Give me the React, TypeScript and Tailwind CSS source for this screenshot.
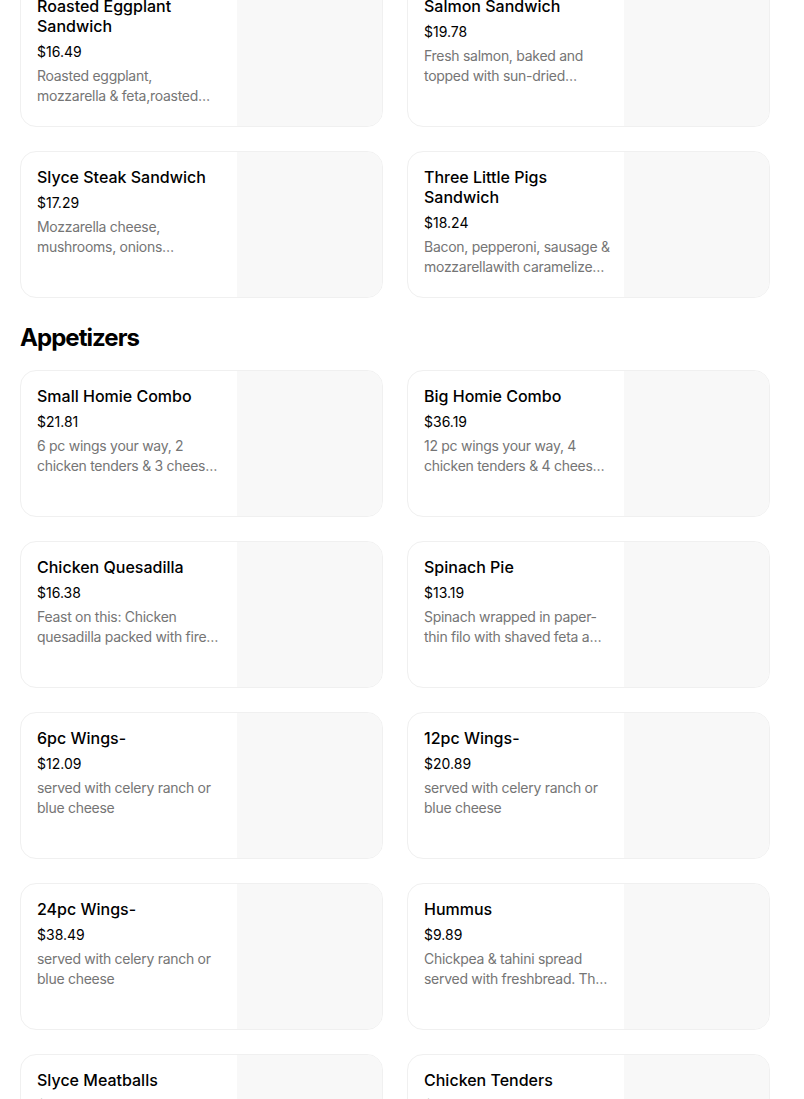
import React from "react";

type Item = {
  name: string;
  price: string;
  desc: string[];
};

// descriptions are already cut the way the menu shows them
const sandwiches: Item[] = [
  { name: "Roasted Eggplant Sandwich", price: "$16.49", desc: ["Roasted eggplant,", "mozzarella & feta,roasted…"] },
  { name: "Salmon Sandwich", price: "$19.78", desc: ["Fresh salmon, baked and", "topped with sun-dried…"] },
  { name: "Slyce Steak Sandwich", price: "$17.29", desc: ["Mozzarella cheese,", "mushrooms, onions…"] },
  { name: "Three Little Pigs Sandwich", price: "$18.24", desc: ["Bacon, pepperoni, sausage &", "mozzarellawith caramelize…"] },
];

const appetizers: Item[] = [
  { name: "Small Homie Combo", price: "$21.81", desc: ["6 pc wings your way, 2", "chicken tenders & 3 chees…"] },
  { name: "Big Homie Combo", price: "$36.19", desc: ["12 pc wings your way, 4", "chicken tenders & 4 chees…"] },
  { name: "Chicken Quesadilla", price: "$16.38", desc: ["Feast on this: Chicken", "quesadilla packed with fire…"] },
  { name: "Spinach Pie", price: "$13.19", desc: ["Spinach wrapped in paper-", "thin filo with shaved feta a…"] },
  { name: "6pc Wings-", price: "$12.09", desc: ["served with celery ranch or", "blue cheese"] },
  { name: "12pc Wings-", price: "$20.89", desc: ["served with celery ranch or", "blue cheese"] },
  { name: "24pc Wings-", price: "$38.49", desc: ["served with celery ranch or", "blue cheese"] },
  { name: "Hummus", price: "$9.89", desc: ["Chickpea & tahini spread", "served with freshbread. Th…"] },
  { name: "Slyce Meatballs", price: "$11.99", desc: ["Homemade meatballs in", "marinara sauce"] },
  { name: "Chicken Tenders", price: "$12.49", desc: ["Crispy chicken tenders with", "your choice of sauce"] },
];

function MenuCard({ item }: { item: Item }) {
  return (
    <div className="flex h-[147px] overflow-hidden rounded-2xl border border-[#f0f0f0] bg-white">
      <div className="flex-1 min-w-0 pl-4 pr-3 pt-[15px]">
        <div className="pr-1 text-[16px] leading-5 font-medium text-black">{item.name}</div>
        <div className="mt-[6px] text-[14px] leading-5 text-black">{item.price}</div>
        <div className="mt-1 text-[14px] leading-5 text-[#757575] tracking-[-0.02em]">
          {item.desc.map((line) => (
            <div key={line} className="whitespace-nowrap">
              {line}
            </div>
          ))}
        </div>
      </div>
      <div className="w-[145px] shrink-0 bg-[#f8f8f8]" />
    </div>
  );
}

export default function App() {
  return (
    <div className="h-[1099px] overflow-hidden bg-white" style={{ fontFamily: "Inter, 'Noto Sans', sans-serif" }}>
      <div className="-mt-[20px] ml-5 w-[750px]">
        <div className="grid grid-cols-2 gap-6">
          {sandwiches.map((item) => (
            <MenuCard key={item.name} item={item} />
          ))}
        </div>
        <h2 className="mt-6 mb-4 text-[24px] leading-8 font-bold tracking-[-0.04em] text-black">Appetizers</h2>
        <div className="grid grid-cols-2 gap-6">
          {appetizers.map((item) => (
            <MenuCard key={item.name} item={item} />
          ))}
        </div>
      </div>
    </div>
  );
}
